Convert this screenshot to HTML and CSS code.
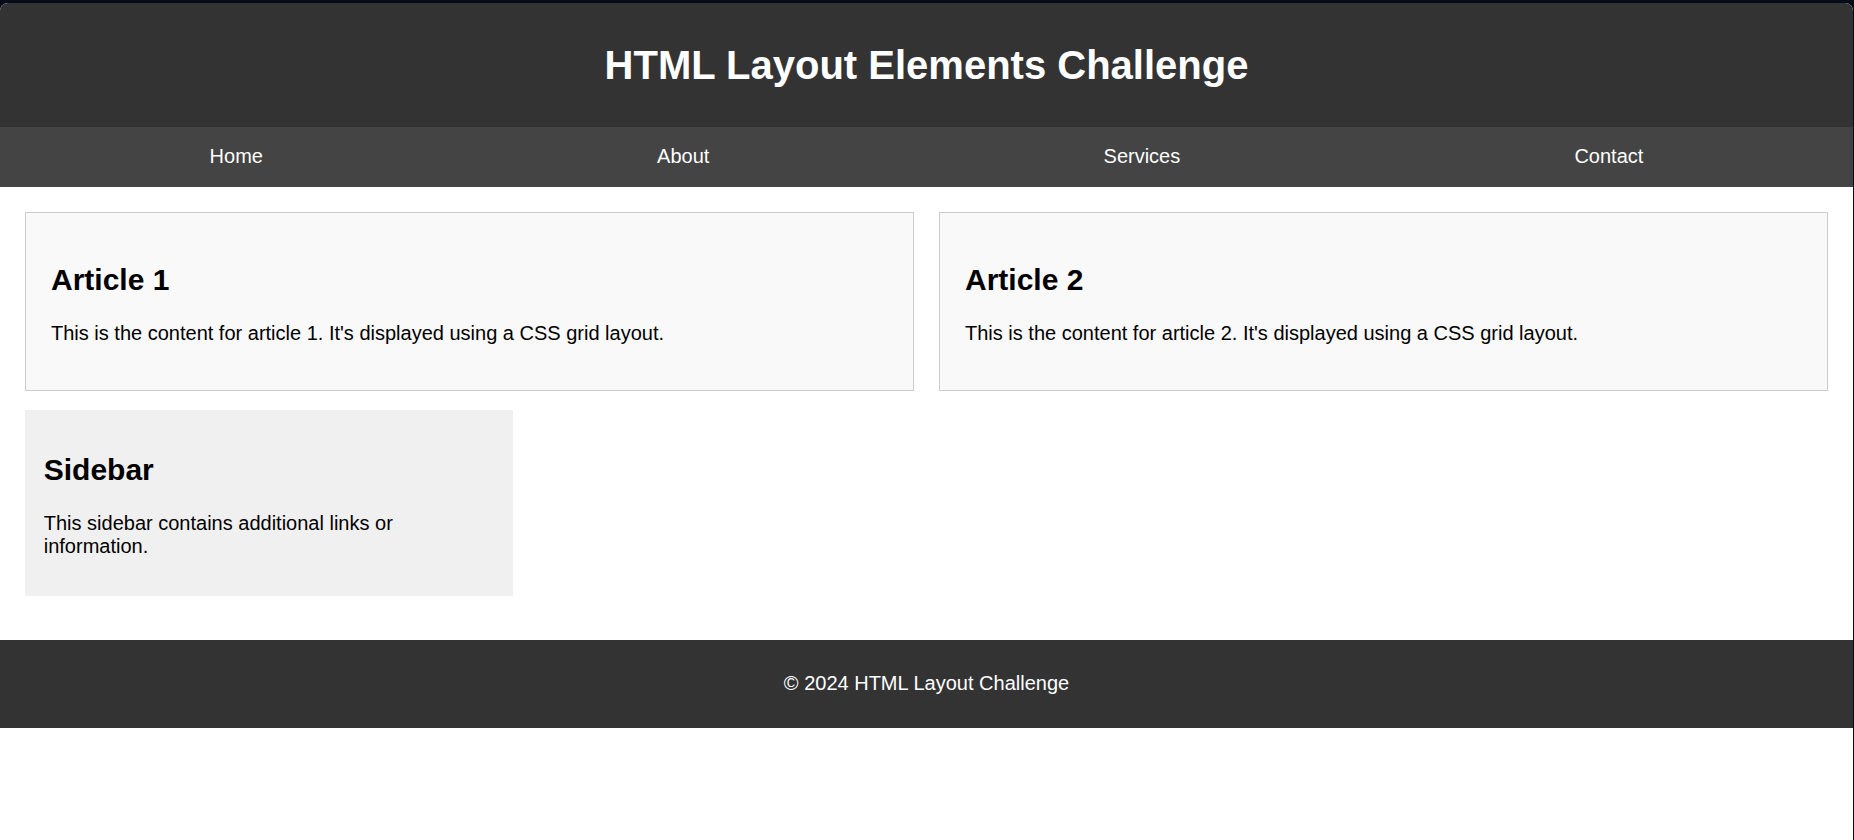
FILE: index.html
```html
<!DOCTYPE html>
<html lang="en">
<head>
<meta charset="UTF-8">
<title>HTML Layout Elements Challenge</title>
<link rel="stylesheet" href="styles.css">
</head>
<body>
<div class="page">
  <header class="site-header">
    <h1 class="site-title">HTML Layout Elements Challenge</h1>
  </header>
  <nav class="site-nav">
    <ul class="nav-list">
      <li><a class="nav-link" href="#">Home</a></li>
      <li><a class="nav-link" href="#">About</a></li>
      <li><a class="nav-link" href="#">Services</a></li>
      <li><a class="nav-link" href="#">Contact</a></li>
    </ul>
  </nav>
  <main class="site-main">
    <section class="articles">
      <article class="article">
        <h2 class="heading">Article 1</h2>
        <p class="text">This is the content for article 1. It's displayed using a CSS grid layout.</p>
      </article>
      <article class="article">
        <h2 class="heading">Article 2</h2>
        <p class="text">This is the content for article 2. It's displayed using a CSS grid layout.</p>
      </article>
    </section>
    <aside class="sidebar">
      <h2 class="heading">Sidebar</h2>
      <p class="text">This sidebar contains additional links or information.</p>
    </aside>
  </main>
  <footer class="site-footer">
    <p class="footer-text">&copy; 2024 HTML Layout Challenge</p>
  </footer>
</div>
</body>
</html>
```
FILE: styles.css
```css
html {
  background: #070b1a;
  height: 100%;
}
body {
  margin: 0;
  padding: 3px 1px 0 0;
  height: 100%;
  box-sizing: border-box;
  font-family: "Liberation Sans", Arial, sans-serif;
  font-size: 20px;
}
.page {
  background: #ffffff;
  min-height: 100%;
  border-radius: 8px 8px 0 0;
  overflow: hidden;
  color: #000;
}
.site-header {
  background: #333333;
  color: #ffffff;
  text-align: center;
  padding: 12px 0 12.25px;
}
.site-title {
  font-size: 40px;
  font-weight: bold;
  margin: 26.8px 0;
  line-height: 46px;
}
.site-nav {
  background: #444444;
  padding: 0 12.5px;
}
.nav-list {
  list-style: none;
  margin: 0;
  padding: 0;
  display: flex;
  justify-content: space-around;
}
.nav-link {
  display: block;
  color: #ffffff;
  text-decoration: none;
  line-height: 23px;
  padding: 18.5px 0;
}
.site-main {
  padding: 25px 25px 25px;
}
.articles {
  display: grid;
  grid-template-columns: 1fr 1fr;
  gap: 25px;
  margin-bottom: 19px;
}
.article {
  background: #f9f9f9;
  border: 1px solid #cccccc;
  padding: 25px;
}
.heading {
  font-size: 30px;
  font-weight: bold;
  line-height: 34.5px;
  margin: 24.9px 0;
}
.text {
  margin: 20px 0;
  line-height: 23px;
}
.sidebar {
  background: #f0f0f0;
  padding: 17.5px 18.75px 18px;
  width: 25%;
  margin-bottom: 19px;
}
.site-footer {
  background: #333333;
  color: #ffffff;
  text-align: center;
  padding: 12.5px 0;
}
.footer-text {
  margin: 20px 0;
  line-height: 23px;
}
```
